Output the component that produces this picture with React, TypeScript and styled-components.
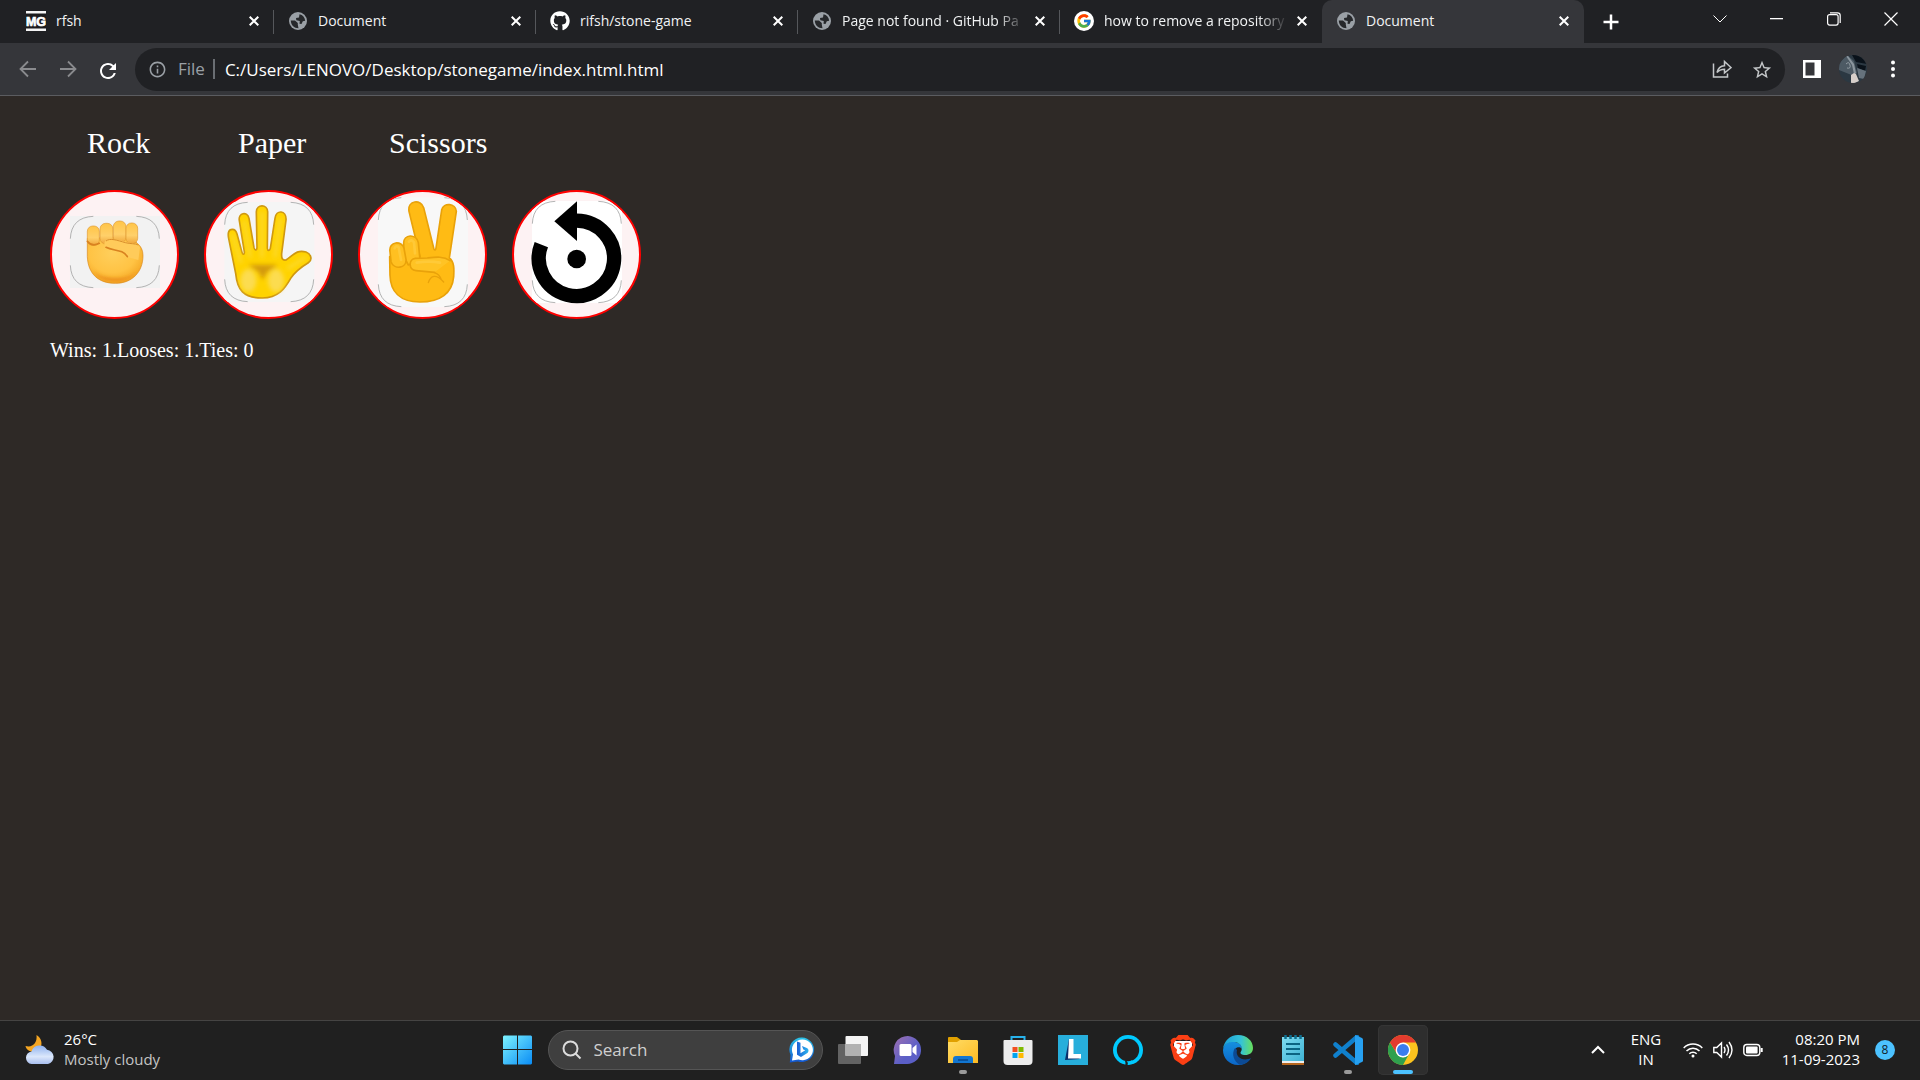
import React, { useState } from "react";
import styled, { createGlobalStyle } from "styled-components";
import { FaGithub } from "react-icons/fa";
import { FcGoogle } from "react-icons/fc";
import { MdRefresh, MdStarOutline, MdInfoOutline } from "react-icons/md";
import { SiBrave } from "react-icons/si";

const GlobalStyle = createGlobalStyle`
  * { box-sizing: border-box; }
  body {
    margin: 0;
    background: #2e2926;
    font-family: "Open Sans", "Noto Sans", sans-serif;
  }
  button {
    border: 0;
    padding: 0;
    background: none;
    color: inherit;
    font: inherit;
  }
  svg { display: block; flex: none; }
`;

const Screen = styled.div`
  display: flex;
  flex-direction: column;
  min-height: 100vh;
`;

/* ---------- browser ---------- */

const TabStrip = styled.header`
  display: flex;
  height: 43px;
  padding-left: 12px;
  background: #202124;
  color: #fff;
`;

const Tabs = styled.nav`
  display: flex;
  flex: 0 1 1572px;
  min-width: 0;
`;

const Tab = styled.div<{ $active?: boolean; $divided?: boolean }>`
  position: relative;
  display: flex;
  align-items: center;
  flex: 1 1 0;
  min-width: 0;
  padding: 0 10px 2px 14px;
  border-radius: 10px 10px 0 0;
  background: ${(p) => (p.$active ? "#35363a" : "transparent")};
  &::after {
    content: "";
    position: absolute;
    right: 0;
    top: 10px;
    width: 1px;
    height: 24px;
    background: ${(p) => (p.$divided ? "#55575b" : "transparent")};
  }
`;

const TabLink = styled.a`
  display: flex;
  align-items: center;
  gap: 10px;
  flex: 1;
  min-width: 0;
  color: #f1f3f4;
  text-decoration: none;
`;

const Favicon = styled.span`
  display: grid;
  place-items: center;
  flex: none;
  width: 20px;
  height: 20px;
  color: #9aa0a6;
`;

const TabTitle = styled.span<{ $fade?: boolean }>`
  flex: 1;
  min-width: 0;
  margin-right: 4px;
  overflow: hidden;
  white-space: nowrap;
  font-size: 14px;
  line-height: 20px;
  mask-image: ${(p) => (p.$fade ? "linear-gradient(to right, #000 84%, transparent)" : "none")};
`;

const IconButton = styled.button<{ $w: number; $h?: number; $color?: string }>`
  display: grid;
  place-items: center;
  flex: none;
  width: ${(p) => p.$w}px;
  height: ${(p) => p.$h ?? 20}px;
  color: ${(p) => p.$color ?? "#fff"};
`;

const WindowButtons = styled.div`
  display: flex;
  margin-left: auto;
`;

const Toolbar = styled.div`
  display: flex;
  align-items: center;
  height: 53px;
  padding: 0 8px;
  background: #35363a;
  border-bottom: 1px solid #5b5c60;
`;

const AddressBar = styled.form`
  display: flex;
  align-items: center;
  flex: 1;
  height: 43px;
  margin: 0 7px;
  padding: 0 3px 0 13px;
  border-radius: 22px;
  background: #202124;
  color: #9aa0a6;
`;

const Scheme = styled.label`
  margin-left: 11px;
  padding-right: 8px;
  border-right: 2px solid #6a6e73;
  font-size: 17px;
  line-height: 20px;
`;

const AddressInput = styled.input`
  flex: 1;
  min-width: 0;
  height: 26px;
  margin-left: 10px;
  padding: 1px 0 0;
  border: 0;
  outline: 0;
  background: none;
  color: #fff;
  font-family: inherit;
  font-size: 17px;
  line-height: 24px;
`;

/* ---------- game ---------- */

const Game = styled.main`
  flex: 1;
  padding: 27px 50px;
  color: #fff;
  font-family: "Liberation Serif", serif;
`;

const Names = styled.div`
  display: grid;
  grid-template-columns: repeat(3, 151px);
  padding-left: 37px;
  font-size: 30px;
  line-height: 40px;
`;

const Moves = styled.div`
  display: flex;
  gap: 25px;
  margin-top: 27px;
`;

const Move = styled.button`
  width: 129px;
  height: 129px;
  overflow: hidden;
  border: 2px solid #f00;
  border-radius: 50%;
  background: #fdf2f3;
`;

const Score = styled.p`
  margin: 19px 0 0;
  font-size: 20px;
  line-height: 24px;
`;

/* ---------- taskbar ---------- */

const Taskbar = styled.footer`
  display: grid;
  grid-template-columns: 1fr auto 1fr;
  align-items: center;
  height: 60px;
  padding-bottom: 2px;
  border-top: 1px solid #454443;
  background: #202020;
  color: #fff;
  font-size: 15px;
  line-height: 20px;
`;

const Weather = styled.button`
  display: flex;
  align-items: center;
  gap: 9px;
  justify-self: start;
  padding-left: 25px;
  text-align: left;
`;

const Muted = styled.span`
  color: #c4c4c4;
`;

const Lines = styled.span<{ $align: string }>`
  display: flex;
  flex-direction: column;
  padding-bottom: 2px;
  text-align: ${(p) => p.$align};
`;

const Apps = styled.div`
  display: flex;
  align-items: center;
  gap: 5px;
`;

const TaskButton = styled.button<{ $active?: boolean; $mark?: "dot" | "bar" }>`
  position: relative;
  display: grid;
  place-items: center;
  width: 50px;
  height: 50px;
  border-radius: 5px;
  background: ${(p) => (p.$active ? "#2e2e2e" : "transparent")};
  box-shadow: ${(p) => (p.$active ? "inset 0 0 0 1px #353535" : "none")};
  &::after {
    content: "";
    position: absolute;
    bottom: 1px;
    width: ${(p) => (p.$mark === "bar" ? 20 : p.$mark === "dot" ? 8 : 0)}px;
    height: 4px;
    border-radius: 2px;
    background: ${(p) => (p.$mark === "bar" ? "#4cc2ff" : "#9a9a9a")};
  }
`;

const SearchBox = styled.label`
  display: flex;
  align-items: center;
  gap: 12px;
  width: 275px;
  height: 40px;
  padding: 0 7px 0 13px;
  border: 1px solid #555;
  border-radius: 20px;
  background: #3f3f3f;
`;

const SearchInput = styled.input`
  flex: 1;
  min-width: 0;
  padding: 0;
  border: 0;
  outline: 0;
  background: none;
  color: #fff;
  font-family: inherit;
  font-size: 17px;
  line-height: 24px;
  &::placeholder { color: #cfcfcf; opacity: 1; }
`;

const Tray = styled.div`
  display: flex;
  align-items: center;
  justify-self: end;
  padding-right: 25px;
`;

const Status = styled.button`
  display: flex;
  gap: 10px;
  margin: 0 13px 0 20px;
`;

const Language = styled.button`
  width: 34px;
  margin-left: 23px;
`;

const Clock = styled.button`
  width: 84px;
  margin-right: 15px;
`;

const Badge = styled.button`
  width: 20px;
  height: 20px;
  border-radius: 50%;
  background: #4cc2ff;
  color: #10202a;
  font-size: 12px;
`;

/* ---------- drawings ---------- */

const Cross = () => (
  <svg width="10" height="10" viewBox="0 0 10 10" stroke="currentColor" strokeWidth="2">
    <path d="M.7.7l8.6 8.6M9.3.7L.7 9.3" />
  </svg>
);

const MgLogo = () => (
  <svg width="20" height="20" viewBox="0 0 20 20">
    <rect width="20" height="20" fill="#f4f4f4" />
    <rect y="2.500" width="20" height="15" fill="#1b1b1d" />
    <text x="10" y="15" textAnchor="middle" fontFamily="Liberation Sans" fontWeight="700" fontSize="12.500" fill="#fff" stroke="#fff" strokeWidth=".7">MG</text>
  </svg>
);

const Globe = () => (
  <svg width="20" height="20" viewBox="-1 -1 20 20">
    <circle cx="9" cy="9" r="9" fill="#9aa0a6" />
    <path fill="#26282b" d="M1.800 8.500H6L8.800 11V12.800L9.500 16.200C5 16.200 1.800 13 1.800 8.500ZM10.500 2.200C13.800 2.900 15.900 5.500 16.200 8.800L13.800 9.300 12.500 12 10.500 11.800 10.800 9 7.300 8.200 7 6 10 5.400Z" />
  </svg>
);

const Corners = ({ x, y, h, fill }: { x: number; y: number; h: number; fill: string }) => {
  const r = x + 269;
  const b = y + h;
  return (
    <>
      <rect x={x} y={y} width="270" height={h} fill={fill} />
      <path
        d={`M${x + 1} ${y + 68}Q${x + 4} ${y + 4} ${x + 70} ${y + 1}M${r - 70} ${y + 1}Q${r - 4} ${y + 4} ${r - 1} ${y + 68}M${r - 1} ${b - 68}Q${r - 4} ${b - 4} ${r - 70} ${b - 1}M${x + 70} ${b - 1}Q${x + 4} ${b - 4} ${x + 1} ${b - 68}`}
        fill="none"
        stroke="#a5a5a5"
        strokeWidth="2.500"
      />
    </>
  );
};

const Rock = () => (
  <svg width="125" height="125" viewBox="66 246 375 375">
    <defs>
      <radialGradient id="fist" cx=".45" cy=".35" r=".7">
        <stop offset="0" stopColor="#ffcf5c" />
        <stop offset=".6" stopColor="#ffc344" />
        <stop offset="1" stopColor="#f2a01c" />
      </radialGradient>
      <linearGradient id="knuckle" x2="0" y2="1">
        <stop offset="0" stopColor="#ffc548" />
        <stop offset=".6" stopColor="#ffd06a" />
        <stop offset="1" stopColor="#f0a63a" />
      </linearGradient>
      <filter id="blend" x="-20%" y="-50%" width="140%" height="200%"><feGaussianBlur stdDeviation="5" /></filter>
    </defs>
    <Corners x={120} y={318} h={216} fill="#f2f2f2" />
    <path d="M172 385V440C174 492 206 520 256 520C306 520 339 486 339 437C339 420 333 409 322 400L300 380Z" fill="url(#fist)" stroke="#d98a1e" strokeWidth="2" />
    <g fill="url(#knuckle)" stroke="#e09a34" strokeWidth="2">
      <rect x="172" y="348" width="36" height="58" rx="16" />
      <rect x="210" y="340" width="39" height="62" rx="17" />
      <rect x="250" y="333" width="38" height="66" rx="17" />
      <rect x="288" y="339" width="35" height="62" rx="16" />
    </g>
    <path d="M238 388C218 389 219 412 236 416C256 420 277 421 292 441L325 450L330 412C322 398 308 402 292 397C272 391 256 388 238 388Z" fill="#ffcb5a" />
    <path d="M172 394Q186 412 208 400M228 412C250 424 278 416 292 440" fill="none" stroke="#d98220" strokeWidth="5" strokeLinecap="round" />
    <path d="M228 393C240 383 262 391 286 398C302 402 315 400 325 405" fill="none" stroke="#d98f2c" strokeWidth="3" />
    <path d="M190 484C206 508 230 514 256 514C282 514 306 505 322 482C306 499 284 505 256 505C229 505 206 499 190 484Z" fill="#ec8f1c" filter="url(#blend)" />
  </svg>
);

const Paper = () => (
  <svg width="125" height="125" viewBox="528 246 375 375">
    <defs>
      <filter id="soft" x="-20%" y="-20%" width="140%" height="140%"><feGaussianBlur stdDeviation="6" /></filter>
    </defs>
    <Corners x={583} y={276} h={300} fill="#f5f5f5" />
    <path
      d="M607 358C595 358 593 370 596 385L617 490C622 540 640 564 697 564C745 564 765 535 782 505C795 485 815 470 835 458C848 450 844 432 828 426C800 418 790 435 768 450C757 452 754 445 755 430L768 330C770 300 738 298 735 325L721 415C719 423 713 423 712 415L713 305C712 282 680 282 679 305L681 412C681 422 674 422 672 413L657 325C652 303 624 308 628 332L643 425C644 435 638 435 636 427L621 372C618 361 612 358 607 358Z"
      fill="#ffd300" stroke="#cf9810" strokeWidth="5" strokeLinejoin="round"
    />
    <g filter="url(#soft)">
      <path d="M607 375L632 455M643 335L660 440M696 308V440M751 328L735 440M775 475L825 443" fill="none" stroke="#fbdc3c" strokeWidth="7" strokeLinecap="round" />
      <path d="M654 464H744L712 486L698 510L686 486Z" fill="#d39a08" />
      <ellipse cx="655" cy="512" rx="24" ry="34" fill="#fcdc50" />
      <ellipse cx="738" cy="512" rx="24" ry="34" fill="#fcdc50" />
    </g>
  </svg>
);

const Scissors = () => (
  <svg width="125" height="125" viewBox="60 246 375 375">
    <Corners x={114} y={262} h={329} fill="#f8f8f8" />
    <g fill="#ffbb14" stroke="#e9a20a" strokeWidth="5" strokeLinejoin="round" strokeLinecap="round">
      <path d="M207 304C202 270 243 267 251 293L281 414C283 423 287 423 288 414L305 300C310 276 348 280 349 304L328 444C344 456 342 480 341 500C337 550 300 576 240 576C180 576 151 545 150 495L149 440L240 440Z" />
      <path d="M191 400C190 372 229 370 235 398L240 450L205 465L192 440Z" fill="#ffc021" />
      <path d="M150 425C145 392 187 392 192 415L198 448C200 476 162 480 153 455Z" fill="#ffc021" />
      <path d="M330 452C310 438 288 441 262 444L226 445C205 447 205 480 228 482L284 487" fill="#ffc324" />
      <path d="M265 518C272 496 288 491 311 516M283 488Q298 492 304 509" fill="none" strokeWidth="4" />
    </g>
    <path d="M164 415Q168 405 176 412L183 450M207 395Q214 386 222 397L225 430M230 458Q268 452 300 458" fill="none" stroke="#ffcf46" strokeWidth="8" strokeLinecap="round" opacity=".6" />
  </svg>
);

const Reset = () => (
  <svg width="125" height="125" viewBox="522 246 375 375">
    <Corners x={576} y={273} h={306} fill="#fff" />
    <path d="M710 332A113 113 0 1 1 604 404" fill="none" stroke="#000" strokeWidth="43" />
    <path d="M711 274V393L643 334Z" />
    <circle cx="710" cy="447" r="28" />
  </svg>
);

const moves = [
  { name: "Rock", Icon: Rock },
  { name: "Paper", Icon: Paper },
  { name: "Scissors", Icon: Scissors },
  { name: "Reset", Icon: Reset },
];

const tabs = [
  { title: "rfsh", icon: <MgLogo /> },
  { title: "Document", icon: <Globe /> },
  { title: "rifsh/stone-game", icon: <FaGithub size={20} color="#fff" /> },
  { title: "Page not found · GitHub Pa", icon: <Globe />, fade: true },
  {
    title: "how to remove a repository",
    fade: true,
    icon: (
      <svg width="20" height="20" viewBox="0 0 20 20">
        <circle cx="10" cy="10" r="10" fill="#fff" />
        <FcGoogle x="2" y="2" size={16} />
      </svg>
    ),
  },
  { title: "Document", icon: <Globe />, active: true },
];

const WindowsLogo = () => (
  <svg width="30" height="30" viewBox="0 0 30 30">
    <linearGradient id="win" x2="1" y2="1"><stop stopColor="#7df3ff" /><stop offset="1" stopColor="#0a8cf5" /></linearGradient>
    <path fill="url(#win)" d="M0 1.500l1-1h13V14H0zM15 .5h13l1 1V14H15zM0 15h14v14.500H1l-1-1zM15 15h14v13.500l-1 1H15z" />
  </svg>
);

const Bing = () => (
  <svg width="26" height="26" viewBox="0 0 26 26">
    <linearGradient id="bing" x2="0" y2="1"><stop stopColor="#2bc4e8" /><stop offset="1" stopColor="#1355d0" /></linearGradient>
    <linearGradient id="bingB" x2="1" y2="0"><stop stopColor="#1b5fd6" /><stop offset="1" stopColor="#2db5ee" /></linearGradient>
    <path fill="url(#bing)" d="M13 .5a12.300 12.300 0 1 1-4 24L.8 25.500 1.500 18A12.300 12.300 0 0 1 13 .5z" />
    <path fill="#fff" d="M13.500 2.500a10.400 10.400 0 1 1-4 20L3 23.500 4 17.500A10.400 10.400 0 0 1 13.500 2.500z" />
    <path fill="url(#bingB)" d="M8 4.500l3.500 1.300v10.500l4.800-3-2-.8-1.300-3.400 4.800 1.900c2.200 1 2.200 3.700.6 4.900L12 20l-4-2.300z" />
  </svg>
);

const TaskView = () => (
  <svg width="30" height="30" viewBox="0 0 30 30">
    <rect y="9" width="23" height="20" rx="1" fill="#636363" />
    <rect x="7.500" y="1" width="22.500" height="20" rx="1" fill="#f4f4f4" />
    <path d="M7.500 9H23v12H7.500z" fill="#b2b2b2" />
  </svg>
);

const Chat = () => (
  <svg width="30" height="30" viewBox="0 0 30 30">
    <linearGradient id="chat" x2="1" y2="1"><stop stopColor="#a070b0" /><stop offset=".6" stopColor="#5b5fc7" /></linearGradient>
    <path fill="url(#chat)" d="M15 1a14 14 0 1 1-2 28H1l1-8A14 14 0 0 1 15 1z" />
    <rect x="6.500" y="9" width="12" height="12" rx="1.500" fill="#fff" />
    <path d="M19.500 13l4-3.500v11l-4-3.500z" fill="#fff" />
  </svg>
);

const Explorer = () => (
  <svg width="30" height="30" viewBox="0 0 30 30">
    <linearGradient id="folder" x2="1" y2="1"><stop stopColor="#ffdc65" /><stop offset="1" stopColor="#fdba22" /></linearGradient>
    <path d="M0 3q0-1 1-1h8l4 3v5H0z" fill="#e0a000" />
    <path d="M0 7h9l3-2h17l1 1v22H0z" fill="url(#folder)" />
    <path d="M5 28v-4q0-3 3-3h14q3 0 3 3v4z" fill="#1276d1" />
    <path d="M10 25h10" stroke="#07488c" strokeWidth="1.500" />
  </svg>
);

const Store = () => (
  <svg width="30" height="30" viewBox="0 0 30 30">
    <path d="M8.500 7V2h13v5" fill="none" stroke="#27b2ec" strokeWidth="2" />
    <path d="M.5 6q0-1 1-1h27q1 0 1 1v20q0 4-4 4h-21q-4 0-4-4z" fill="#ededed" />
    <path fill="#f25022" d="M9.500 12h5v5h-5z" /><path fill="#7fba00" d="M15.500 12h5v5h-5z" />
    <path fill="#00a4ef" d="M9.500 18h5v5h-5z" /><path fill="#ffb900" d="M15.500 18h5v5h-5z" />
  </svg>
);

const Vantage = () => (
  <svg width="30" height="30" viewBox="0 0 30 30">
    <path fill="#27aedb" d="M0 0h30v30H0z" />
    <path fill="#0a2f6b" d="M11 4L7 25l15-1-8-5z" />
    <path fill="#fff" d="M11 4h4.500v15H23v4.500H10z" />
  </svg>
);

const Alexa = () => (
  <svg width="30" height="30" viewBox="0 0 30 30">
    <circle cx="15" cy="15" r="15" fill="#00caff" />
    <circle cx="15" cy="15" r="11.200" fill="#202020" />
    <path fill="#202020" d="M12.500 25.500C14 26 15 27 15 30h-2.600q.4-2-.6-5z" />
    <path fill="#00caff" d="M14.500 30C15 27.500 16.500 26.300 19 25.300L21 28z" />
  </svg>
);

const Brave = () => (
  <svg width="30" height="30" viewBox="0 0 30 30">
    <path d="M6 6h18v10l-9 11-9-11z" fill="#fff" />
    <SiBrave size={30} color="#fb3f14" />
  </svg>
);

const Edge = () => (
  <svg width="30" height="30" viewBox="0 0 30 30">
    <defs>
      <linearGradient id="edgeTop"><stop stopColor="#1b9fd8" /><stop offset=".6" stopColor="#35c3d8" /><stop offset="1" stopColor="#68e05a" /></linearGradient>
      <linearGradient id="edgeLow" x2="0" y2="1"><stop stopColor="#1590df" /><stop offset="1" stopColor="#0b66c8" /></linearGradient>
    </defs>
    <path fill="url(#edgeLow)" d="M0 15C1 8 7 6 12 7c5 1 7 4 7 7-2-3-8-2-8 4 0 7 8 10 16 6-3 4-7 6-12 6C6 30 0 23 0 15z" />
    <path fill="#0c4a94" d="M12 13c-4 6-1 14 5 16.800C22 29.500 26 27 28 23c-8 4-16-1-14-8z" />
    <path fill="url(#edgeTop)" d="M0 14C1 6 7 0 15 0c9 0 15 6 15 13 0 5-4 7-7.500 7-4 0-6-1.500-4.500-3.500C20 13 18 8 12 7 6 6.500 1.500 9 0 14z" />
  </svg>
);

const Notepad = () => (
  <svg width="30" height="30" viewBox="0 0 30 30">
    <linearGradient id="note" x2="1" y2="1"><stop stopColor="#7fdcf0" /><stop offset="1" stopColor="#3fb3d4" /></linearGradient>
    <path fill="#b5651d" d="M4 25h22v5H4z" /><path fill="#eee" d="M4 24h22v4H4z" />
    <path fill="url(#note)" d="M4 2h22v24H4z" />
    <path d="M7.500 0v4M12.500 0v4M17.500 0v4M22.500 0v4" stroke="#0e6f90" strokeWidth="2.500" />
    <path d="M8 9h14M8 14h14M8 19h14" stroke="#0b6482" strokeWidth="1.800" />
  </svg>
);

const VsCode = () => (
  <svg width="30" height="30" viewBox="0 0 30 30">
    <path d="M2.500 9.500L24 28M2.500 20.500L24 2" stroke="#1080cc" strokeWidth="4.500" strokeLinecap="round" />
    <path fill="#27a1f1" d="M22 0l7 3q1 .5 1 1.500v21q0 1-1 1.500l-7 3V0z" />
    <path fill="#202020" d="M22 9v12l-8-6z" />
  </svg>
);

const Chrome = () => (
  <svg width="30" height="30" viewBox="0 0 30 30">
    <circle cx="15" cy="15" r="15" fill="#fcc31e" />
    <path d="M2 7.500L8.900 18.500 15 22.400 21 19 15 30A15 15 0 0 1 2 7.500z" fill="#2fa04e" />
    <path d="M2 7.500A15 15 0 0 1 28 7.500H15L8.900 18.500z" fill="#e33b2e" />
    <circle cx="15" cy="15" r="7.400" fill="#fff" />
    <circle cx="15" cy="15" r="6" fill="#3b7ded" />
  </svg>
);

const apps: { name: string; Icon: () => React.JSX.Element; mark?: "dot" | "bar" }[] = [
  { name: "Task view", Icon: TaskView },
  { name: "Chat", Icon: Chat },
  { name: "File Explorer", Icon: Explorer, mark: "dot" },
  { name: "Microsoft Store", Icon: Store },
  { name: "Lenovo Vantage", Icon: Vantage },
  { name: "Alexa", Icon: Alexa },
  { name: "Brave", Icon: Brave },
  { name: "Edge", Icon: Edge },
  { name: "Notepad", Icon: Notepad },
  { name: "Visual Studio Code", Icon: VsCode, mark: "dot" },
  { name: "Google Chrome", Icon: Chrome, mark: "bar" },
];

const stroke = { fill: "none", stroke: "currentColor" };

export default function App() {
  const [url, setUrl] = useState("C:/Users/LENOVO/Desktop/stonegame/index.html.html");
  return (
    <Screen>
      <GlobalStyle />
      <TabStrip>
        <Tabs aria-label="Tabs">
          {tabs.map((t, i) => (
            <Tab key={i} $active={t.active} $divided={i < 4}>
              <TabLink href="#">
                <Favicon>{t.icon}</Favicon>
                <TabTitle $fade={t.fade}>{t.title}</TabTitle>
              </TabLink>
              <IconButton $w={20} aria-label="Close tab"><Cross /></IconButton>
            </Tab>
          ))}
        </Tabs>
        <IconButton $w={54} $h={43} aria-label="New tab">
          <svg width="16" height="16" viewBox="0 0 16 16" {...stroke} strokeWidth="2.500"><path d="M8 .5v15M.5 8h15" /></svg>
        </IconButton>
        <WindowButtons>
          <IconButton $w={57} $h={37} aria-label="Search tabs">
            <svg width="14" height="8" viewBox="0 0 14 8" {...stroke}><path d="M.5.5L7 7 13.500.5" /></svg>
          </IconButton>
          <IconButton $w={57} $h={37} aria-label="Minimize">
            <svg width="14" height="2" viewBox="0 0 14 2" fill="currentColor"><path d="M0 0h13v1.300H0z" /></svg>
          </IconButton>
          <IconButton $w={57} $h={37} aria-label="Restore">
            <svg width="14" height="14" viewBox="0 0 14 14" {...stroke} strokeWidth="1.200"><rect x=".6" y="2.600" width="10.500" height="10.500" rx="2" /><path d="M3 .8h7.500q2.700 0 2.700 2.700V11" /></svg>
          </IconButton>
          <IconButton $w={58} $h={37} aria-label="Close window">
            <svg width="14" height="14" viewBox="0 0 14 14" {...stroke} strokeWidth="1.200"><path d="M.5.5l13 13M13.500.5l-13 13" /></svg>
          </IconButton>
        </WindowButtons>
      </TabStrip>

      <Toolbar>
        <IconButton $w={40} $color="#8a8b8e" aria-label="Back">
          <svg width="18" height="18" viewBox="0 0 18 18" {...stroke} strokeWidth="1.800"><path d="M17 9H2M9 1.500L1.500 9 9 16.500" /></svg>
        </IconButton>
        <IconButton $w={40} $color="#8a8b8e" aria-label="Forward">
          <svg width="18" height="18" viewBox="0 0 18 18" {...stroke} strokeWidth="1.800"><path d="M1 9h15M9 1.500L16.500 9 9 16.500" /></svg>
        </IconButton>
        <IconButton $w={40} aria-label="Reload"><MdRefresh size={24} /></IconButton>
        <AddressBar onSubmit={(e) => e.preventDefault()}>
          <MdInfoOutline size={19} />
          <Scheme htmlFor="address">File</Scheme>
          <AddressInput id="address" value={url} onChange={(e) => setUrl(e.target.value)} />
          <IconButton $w={40} type="button" $color="#c4c7c9" aria-label="Share">
            <svg width="20" height="20" viewBox="0 0 20 20" {...stroke} strokeWidth="1.500">
              <path d="M1.500 4.500V18h14v-3.500M5 13.500C6 9 8.500 7 12.500 6.800V2.500l6.500 6-6.500 5.500v-3.800C9 10.200 7 11 5 13.500z" />
            </svg>
          </IconButton>
          <IconButton $w={40} type="button" $color="#c4c7c9" aria-label="Bookmark"><MdStarOutline size={22} /></IconButton>
        </AddressBar>
        <IconButton $w={40} aria-label="Side panel">
          <svg width="18" height="18" viewBox="0 0 18 18"><path fill="#fff" fillRule="evenodd" d="M0 0h18v18H0zM2.500 2.500v13h9v-13z" /></svg>
        </IconButton>
        <IconButton $w={42} $h={28} aria-label="Profile">
          <svg width="28" height="28" viewBox="0 0 28 28">
            <clipPath id="face"><circle cx="14" cy="14" r="14" /></clipPath>
            <g clipPath="url(#face)">
              <path fill="#2b3842" d="M0 0h28v28H0z" />
              <path fill="#4d5a64" d="M0 8l8-8 7 6 3 12-3 3-15-6z" />
              <path fill="#8b969e" d="M7 1l2 0 6 8 2 9-2 1-2-9z" />
              <path fill="#0a121a" d="M13 0h15v9l-11-2zM18 9l9 2-1 5-7-3z" />
              <path fill="#d7cfca" d="M12 20l3-2 2 1 3 7-4 2h-4z" />
              <path fill="#66727c" d="M18 13l9 3-2 8-5-1z" />
              <path fill="none" stroke="#a4adb4" strokeWidth=".8" d="M7 9q3-3 4 1t-3 3" />
            </g>
          </svg>
        </IconButton>
        <IconButton $w={38} aria-label="Menu">
          <svg width="4" height="18" viewBox="0 0 4 18" fill="currentColor"><circle cx="2" cy="2.500" r="2" /><circle cx="2" cy="9" r="2" /><circle cx="2" cy="15.500" r="2" /></svg>
        </IconButton>
      </Toolbar>

      <Game>
        <Names><span>Rock</span><span>Paper</span><span>Scissors</span></Names>
        <Moves>
          {moves.map(({ name, Icon }) => <Move key={name} aria-label={name}><Icon /></Move>)}
        </Moves>
        <Score>Wins: 1.Looses: 1.Ties: 0</Score>
      </Game>

      <Taskbar>
        <Weather>
          <svg width="30" height="30" viewBox="0 0 30 30">
            <linearGradient id="cloud" x2="0" y2="1"><stop stopColor="#8fb2ee" /><stop offset=".6" stopColor="#dbe7fb" /><stop offset="1" stopColor="#a9bfef" /></linearGradient>
            <path fill="#f5a623" d="M11.500 0c8 5 6 16-3 16.500C4 17 1 14 .5 11c7 2 12-3 11-11z" />
            <path fill="url(#cloud)" d="M6.500 29a6.300 6.300 0 0 1 0-12.500A8.500 8.500 0 0 1 22 14.800 7.200 7.200 0 0 1 23 29z" />
          </svg>
          <Lines $align="left"><span>26°C</span><Muted>Mostly cloudy</Muted></Lines>
        </Weather>
        <Apps>
          <TaskButton aria-label="Start"><WindowsLogo /></TaskButton>
          <SearchBox>
            <svg width="20" height="20" viewBox="0 0 20 20" fill="none" stroke="#dcdcdc" strokeWidth="2"><circle cx="8.500" cy="8.500" r="7" /><path d="M13.500 13.500l5 5" /></svg>
            <SearchInput type="text" placeholder="Search" aria-label="Search" />
            <Bing />
          </SearchBox>
          {apps.map(({ name, Icon, mark }) => (
            <TaskButton key={name} aria-label={name} $mark={mark} $active={mark === "bar"}><Icon /></TaskButton>
          ))}
        </Apps>
        <Tray>
          <IconButton $w={16} aria-label="Hidden icons">
            <svg width="14" height="9" viewBox="0 0 14 9" {...stroke} strokeWidth="2"><path d="M1 8l6-6 6 6" /></svg>
          </IconButton>
          <Language><Lines $align="center"><span>ENG</span><span>IN</span></Lines></Language>
          <Status aria-label="Network, volume and battery">
            <svg width="20" height="20" viewBox="0 0 20 20" {...stroke} strokeWidth="1.500">
              <path d="M.7 8a13 13 0 0 1 18.600 0M3.500 11a9 9 0 0 1 13 0M6.300 13.800a5.200 5.200 0 0 1 7.400 0" /><circle cx="10" cy="16" r="1.500" fill="#fff" stroke="none" />
            </svg>
            <svg width="20" height="20" viewBox="0 0 20 20" {...stroke} strokeWidth="1.400">
              <path d="M.8 7.500h3L8.500 3v14l-4.700-4.500h-3zM11 7q2 3 0 6M13.500 4.500q4 5.500 0 11M16 2q6 8 0 16" />
            </svg>
            <svg width="20" height="20" viewBox="0 0 20 20" {...stroke} strokeWidth="1.400">
              <rect x=".8" y="4.500" width="16" height="11" rx="3" /><rect x="3" y="6.600" width="11.600" height="6.800" rx="1" fill="#fff" stroke="none" /><path d="M18.700 8v4" strokeWidth="2" />
            </svg>
          </Status>
          <Clock><Lines $align="right"><span>08:20 PM</span><span>11-09-2023</span></Lines></Clock>
          <Badge aria-label="8 notifications">8</Badge>
        </Tray>
      </Taskbar>
    </Screen>
  );
}
